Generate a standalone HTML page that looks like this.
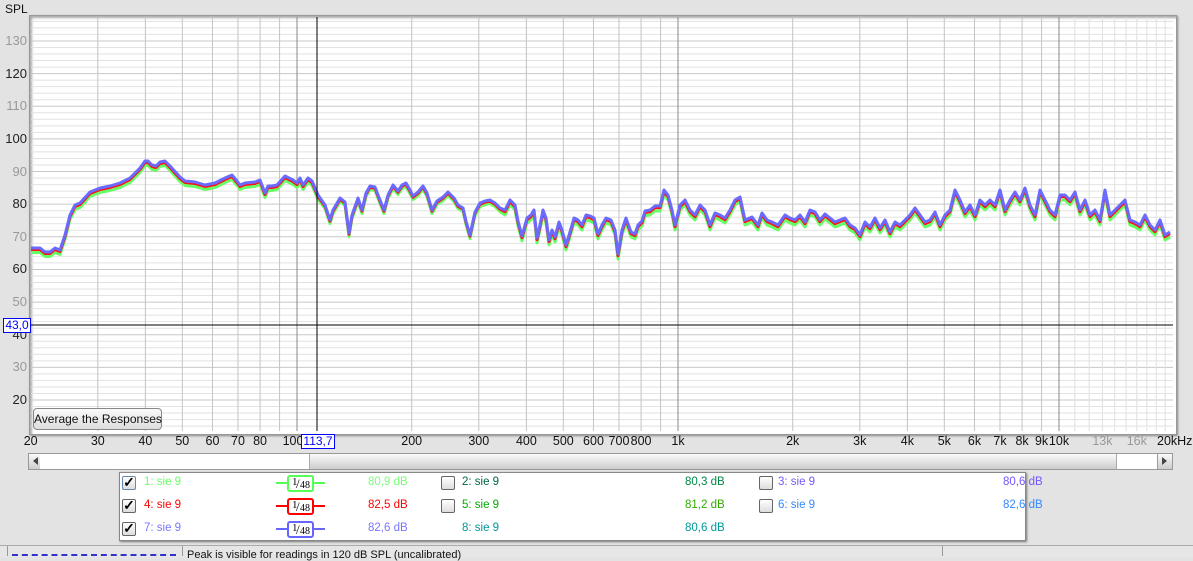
<!DOCTYPE html>
<html><head><meta charset="utf-8"><style>
body{margin:0;width:1193px;height:556px;background:#e3e3e3;position:relative;overflow:hidden;font-family:"Liberation Sans",sans-serif;}
.a{position:absolute;white-space:nowrap;}
.yl{position:absolute;right:1166px;font-size:13px;color:#999;}
.yl.b{color:#222;}
.xl{position:absolute;top:434px;font-size:12.5px;color:#111;transform:translateX(-50%);}
.cb{position:absolute;width:12px;height:12px;border:1px solid #666;border-radius:2px;background:linear-gradient(#fff,#ddd);font-size:14px;line-height:11px;text-align:center;font-weight:bold;color:#000;}
.lg{position:absolute;font-size:11.5px;}
</style></head><body>
<div class="a" style="left:5px;top:2px;font-size:12px;color:#111">SPL</div>
<div class="a" style="left:29px;top:15px;width:1146px;height:418px;background:#fff;border:1px solid #999;box-shadow:inset 2px 2px 2px #aaa, 1px 1px 2px #888;"></div>
<svg class="a" style="left:0;top:0" width="1193" height="556" id="sv"></svg>
<div id="yl"></div>
<div class="a" style="left:33px;top:408px;width:127px;height:20px;border:1px solid #888;border-radius:4px;background:linear-gradient(#fafafa,#ddd);font-size:12px;line-height:20px;text-align:center;color:#111">Average the Responses</div>
<div class="a" style="left:3px;top:318px;width:26px;height:13px;border:1px solid #00f;background:#fff;color:#00f;font-size:12px;line-height:13px;text-align:center">43,0</div>
<div id="xl"></div>
<div class="a" style="left:301px;top:434px;width:32px;height:13px;border:1px solid #00f;background:#fff;color:#00f;font-size:12px;line-height:13px;text-align:center">113,7</div>
<div class="a" style="left:28px;top:453px;width:1143px;height:15px;border:1px solid #999;background:linear-gradient(#fafafa,#ccc)"></div>
<div class="a" style="left:40px;top:454px;width:269px;height:15px;background:#fff;border-right:1px solid #aaa"></div>
<div class="a" style="left:1116px;top:454px;width:40px;height:15px;background:#fff;border-left:1px solid #aaa"></div>
<div class="a" style="left:33px;top:457px;width:0;height:0;border:4px solid transparent;border-right:5px solid #444;border-left:0"></div>
<div class="a" style="left:1157px;top:454px;width:14px;height:15px;border-left:1px solid #999"></div>
<div class="a" style="left:1162px;top:457px;width:0;height:0;border:4px solid transparent;border-left:5px solid #444;border-right:0"></div>
<div class="a" style="left:119px;top:472px;width:905px;height:67px;background:#fff;border:1px solid #888;box-shadow:1px 1px 2px #777"></div>
<div class="cb" style="left:122px;top:476px;border-color:#68a">✓</div>
<div class="cb" style="left:122px;top:499px">✓</div>
<div class="cb" style="left:122px;top:522px">✓</div>
<div class="lg" style="left:144px;top:476px;color:#66ff66">1: sie 9</div>
<div class="lg" style="left:144px;top:499px;color:#ff0000">4: sie 9</div>
<div class="lg" style="left:144px;top:522px;color:#7777ff">7: sie 9</div>
<div id="flt"></div>
<div class="lg" style="left:368px;top:476px;color:#77ff77">80,9 dB</div>
<div class="lg" style="left:368px;top:499px;color:#ff0000">82,5 dB</div>
<div class="lg" style="left:368px;top:522px;color:#7777ff">82,6 dB</div>
<div class="cb" style="left:441px;top:476px"></div>
<div class="cb" style="left:441px;top:499px"></div>
<div class="lg" style="left:462px;top:476px;color:#006644">2: sie 9</div>
<div class="lg" style="left:462px;top:499px;color:#00aa00">5: sie 9</div>
<div class="lg" style="left:462px;top:522px;color:#009999">8: sie 9</div>
<div class="lg" style="left:685px;top:476px;color:#008844">80,3 dB</div>
<div class="lg" style="left:685px;top:499px;color:#33aa00">81,2 dB</div>
<div class="lg" style="left:685px;top:522px;color:#009999">80,6 dB</div>
<div class="cb" style="left:759px;top:476px"></div>
<div class="cb" style="left:759px;top:499px"></div>
<div class="lg" style="left:778px;top:476px;color:#7755ff">3: sie 9</div>
<div class="lg" style="left:778px;top:499px;color:#3388ff">6: sie 9</div>
<div class="lg" style="left:1003px;top:476px;color:#7755ff">80,6 dB</div>
<div class="lg" style="left:1003px;top:499px;color:#3388ff">82,6 dB</div>
<div class="a" style="left:0;top:545px;width:1193px;height:11px;border-top:1px solid #aaa;background:#e6e6e6"></div>
<div class="a" style="left:7px;top:546px;width:1px;height:10px;background:#999"></div>
<div class="a" style="left:182px;top:546px;width:1px;height:10px;background:#999"></div>
<div class="a" style="left:942px;top:546px;width:1px;height:10px;background:#999"></div>
<div class="a" style="left:12px;top:554px;width:164px;border-top:2px dashed #33c"></div>
<div class="a" style="left:187px;top:549px;font-size:11px;color:#111">Peak is visible for readings in 120 dB SPL (uncalibrated)</div>
<script>
var s=document.getElementById('sv'),h='';
function X(f){return 297+381*Math.log10(f/100);}
function Y(v){return 400-(v-20)*3.264;}
var L=31,R=1173,T=17,B=431;
for(var v=12;v<=136;v+=2){var y=Y(v);h+='<line x1="'+L+'" x2="'+R+'" y1="'+y+'" y2="'+y+'" stroke="'+(v%10==0?'#c8c8c8':'#e2e2e2')+'" stroke-width="1"/>';}
var fs=[];[10,100,1000].forEach(function(d){for(var k=1;k<10;k++){var f=k*d;if(f>20)fs.push(f);}});
fs.push(10000);
fs.forEach(function(f){var x=X(f);var c=(f==100||f==1000||f==10000)?'#888':'#c4c4c4';h+='<line x1="'+x+'" x2="'+x+'" y1="'+T+'" y2="'+B+'" stroke="'+c+'"/>';});
for(var k=11;k<20;k++){var x=X(k*1000);h+='<line x1="'+x+'" x2="'+x+'" y1="'+T+'" y2="'+B+'" stroke="#e0e0e0"/>';}
h+='<line x1="'+L+'" x2="'+R+'" y1="325" y2="325" stroke="#000"/>';
var p="31,248 40,248 45,252 50,252 55,248 60,250 65,235 70,215 75,205 80,203 90,192 100,188 110,186 120,183 130,178 140,168 145,161 148,161 152,165 156,166 160,162 165,161 170,166 180,177 185,181 195,182 205,185 215,183 225,178 232,175 237,181 240,185 245,183 255,182 260,180 265,193 268,186 272,186 277,185 285,176 293,180 297,183 300,178 303,185 308,178 312,181 318,195 325,205 330,220 333,210 340,198 345,202 349,233 352,215 358,198 362,210 366,193 370,186 375,187 380,200 384,210 388,195 393,185 398,191 402,185 406,183 410,190 413,196 418,192 423,186 427,193 432,210 437,201 443,197 448,192 454,198 458,205 463,208 466,221 470,235 475,212 480,203 485,201 490,200 495,203 500,208 505,210 510,200 515,205 518,221 522,236 527,218 531,215 534,210 537,238 540,225 543,210 546,218 549,240 552,230 555,237 559,222 562,230 566,245 570,232 574,218 578,220 582,225 586,215 590,216 594,218 598,234 602,225 606,218 611,220 615,230 618,254 622,230 626,218 631,232 635,234 638,225 642,221 645,211 650,210 655,206 660,206 664,190 668,195 672,210 675,225 680,205 685,200 690,210 695,215 700,205 705,210 710,225 715,213 720,215 725,218 730,210 735,200 740,197 745,220 752,217 758,225 762,213 767,220 772,222 778,225 785,215 790,218 795,220 800,215 805,222 810,210 815,212 820,220 825,214 830,218 835,222 840,220 845,218 850,225 855,228 860,235 865,222 870,227 875,218 880,228 885,220 890,232 895,222 900,225 905,220 910,215 915,208 920,215 925,222 930,220 935,212 940,225 945,215 950,210 955,190 960,200 965,212 970,205 975,215 980,200 985,205 990,200 995,205 1000,190 1005,210 1010,200 1015,192 1020,200 1025,188 1030,205 1035,215 1040,190 1045,200 1050,210 1055,215 1060,195 1065,195 1070,200 1075,192 1080,210 1085,200 1090,215 1095,210 1100,220 1105,190 1110,215 1115,210 1120,205 1125,200 1130,220 1135,222 1140,225 1145,215 1150,225 1155,230 1160,220 1165,235 1170,232".split(' ').map(function(q){return q.split(',').map(Number);});
function pl(dy,c){return '<polyline fill="none" stroke="'+c+'" stroke-width="3" stroke-linejoin="round" points="'+p.map(function(q){return q[0]+','+(q[1]+(q[0]<320?dy:dy*0.8+(q[0]>500?dy*0.3:0)))}).join(' ')+'"/>';}
h+=pl(4.5,'#66ff66')+pl(1.5,'#ff1111')+pl(0,'#6a6aff');
h+='<line x1="317" x2="317" y1="'+T+'" y2="'+B+'" stroke="#000"/>';
s.innerHTML=h;
var yl='';for(var v=20;v<=130;v+=10){yl+='<div class="yl'+(v%20==0?' b':'')+'" style="top:'+(Y(v)-8)+'px">'+v+'</div>';}
document.getElementById('yl').innerHTML=yl;
var xs=[[20,'20'],[30,'30'],[40,'40'],[50,'50'],[60,'60'],[70,'70'],[80,'80'],[100,'100'],[200,'200'],[300,'300'],[400,'400'],[500,'500'],[600,'600'],[700,'700'],[800,'800'],[1000,'1k'],[2000,'2k'],[3000,'3k'],[4000,'4k'],[5000,'5k'],[6000,'6k'],[7000,'7k'],[8000,'8k'],[9000,'9k'],[10000,'10k'],[13000,'13k'],[16000,'16k']];
var xh='';xs.forEach(function(a){var x=X(a[0]);if(a[0]==100)x-=4;xh+='<div class="xl" style="left:'+x+'px;'+((a[0]==13000||a[0]==16000)?'color:#999':'')+'">'+a[1]+'</div>';});
xh+='<div class="a" style="left:1157px;top:434px;font-size:12.5px;color:#111">20kHz</div>';
document.getElementById('xl').innerHTML=xh;
var fh='';[['#55ff55',476],['#ff0000',499],['#6666ff',522]].forEach(function(a){fh+='<div class="a" style="left:276px;top:'+(a[1]+6)+'px;width:49px;height:2px;background:'+a[0]+'"></div><div class="a" style="left:287px;top:'+(a[1]-1)+'px;width:23px;height:13px;border:2px solid '+a[0]+';border-radius:3px;background:#fff;color:#000;font-family:\'Liberation Serif\',serif"><span class="a" style="left:3px;top:-1px;font-size:11px">1</span><span class="a" style="left:7px;top:-1px;font-size:13px">/</span><span class="a" style="left:11px;top:3px;font-size:10px">48</span></div>';});
document.getElementById('flt').innerHTML=fh;
</script>
</body></html>
